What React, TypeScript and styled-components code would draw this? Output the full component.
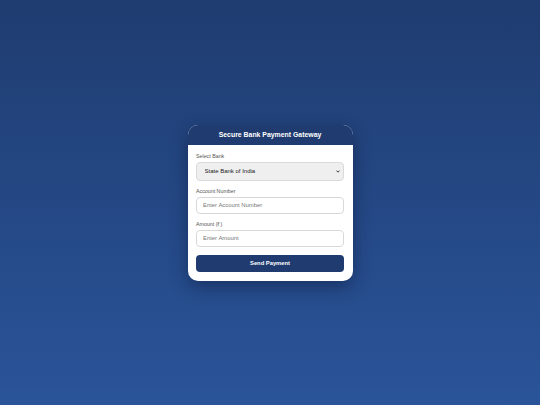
import styled, { createGlobalStyle } from "styled-components";

const GlobalStyle = createGlobalStyle`
  html, body {
    margin: 0;
    padding: 0;
  }
  body {
    font-family: "Liberation Sans", Arial, sans-serif;
    background: linear-gradient(to bottom, #1f3c70, #2a5499);
    min-height: 100vh;
  }
`;

const Page = styled.main`
  display: flex;
  justify-content: center;
  align-items: center;
  min-height: 100vh;
`;

const Card = styled.section`
  width: 165px;
  background: #ffffff;
  border-radius: 10px;
  overflow: hidden;
  box-shadow: 0 6px 18px rgba(8, 20, 50, 0.45);
`;

const Header = styled.header`
  display: flex;
  justify-content: center;
  align-items: center;
  height: 20px;
  background: #1f3b70;
  color: #ffffff;
  font-weight: 700;
  font-size: 6.9px;
`;

const Form = styled.form`
  display: flex;
  flex-direction: column;
  padding: 8px 8.5px 9px;
`;

const Field = styled.div`
  display: flex;
  flex-direction: column;
  margin-bottom: 7px;
`;

const Label = styled.label`
  font-size: 5.3px;
  color: #555;
  line-height: 6px;
  margin-bottom: 3px;
`;

const SelectWrap = styled.div`
  position: relative;
  display: flex;
`;

const Select = styled.select`
  appearance: none;
  height: 19px;
  width: 100%;
  box-sizing: border-box;
  padding: 0 10px 0 7.5px;
  font-family: "Liberation Sans", Arial, sans-serif;
  font-size: 6px;
  color: #222;
  background-color: #efefef;
  border: 0.6px solid #dadada;
  border-radius: 4px;
  outline: none;
`;

const Chevron = styled.svg`
  position: absolute;
  right: 4px;
  top: 8px;
  width: 4px;
  height: 3px;
  pointer-events: none;
`;

const Input = styled.input`
  height: 17px;
  width: 100%;
  box-sizing: border-box;
  padding: 0 6px;
  font-family: "Liberation Sans", Arial, sans-serif;
  font-size: 5.9px;
  color: #222;
  background: #ffffff;
  border: 0.6px solid #d8d8d8;
  border-radius: 4px;
  outline: none;

  &::placeholder {
    color: #777;
  }
`;

const Button = styled.button`
  height: 17px;
  margin-top: 1px;
  border: none;
  border-radius: 4px;
  background: #1f3b70;
  color: #ffffff;
  font-family: "Liberation Sans", Arial, sans-serif;
  font-weight: 700;
  font-size: 5.8px;
  cursor: pointer;
`;

export default function App() {
  return (
    <>
      <GlobalStyle />
      <Page>
        <Card>
          <Header>Secure Bank Payment Gateway</Header>
          <Form onSubmit={e => e.preventDefault()}>
            <Field>
              <Label>Select Bank</Label>
              <SelectWrap>
                <Select defaultValue="sbi">
                  <option value="sbi">State Bank of India</option>
                  <option value="hdfc">HDFC Bank</option>
                  <option value="icici">ICICI Bank</option>
                </Select>
                <Chevron viewBox="0 0 4 3">
                  <path d="M0.5 0.6 L2 2.2 L3.5 0.6" fill="none" stroke="#222" strokeWidth="0.9" />
                </Chevron>
              </SelectWrap>
            </Field>
            <Field>
              <Label>Account Number</Label>
              <Input type="text" placeholder="Enter Account Number" />
            </Field>
            <Field>
              <Label>Amount (₹)</Label>
              <Input type="number" placeholder="Enter Amount" />
            </Field>
            <Button type="submit">Send Payment</Button>
          </Form>
        </Card>
      </Page>
    </>
  );
}
